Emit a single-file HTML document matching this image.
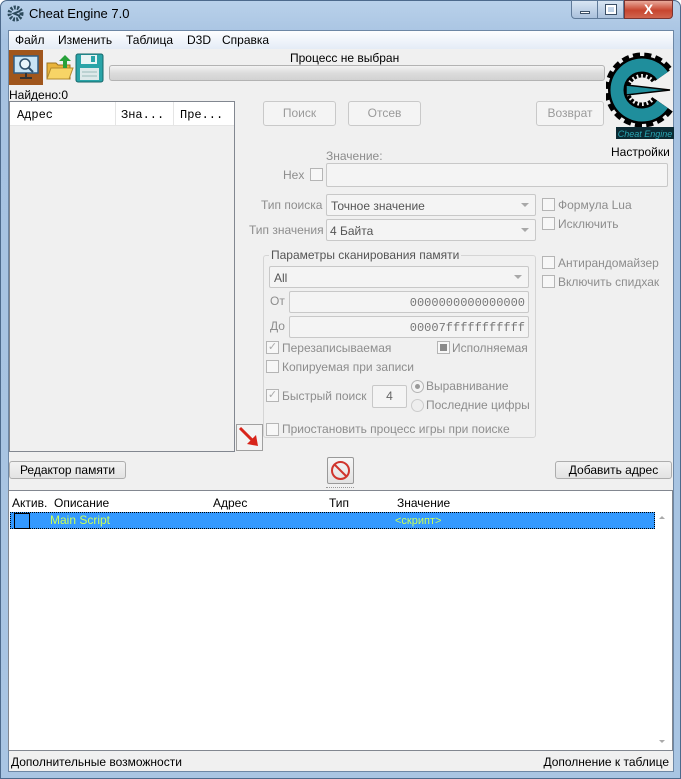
<!DOCTYPE html>
<html><head><meta charset="utf-8"><style>
*{box-sizing:border-box;margin:0;padding:0}
body{width:681px;height:779px;position:relative;overflow:hidden;font-family:"Liberation Sans","DejaVu Sans",sans-serif;font-size:12px;color:#000;background:#fff}
.a{position:absolute;white-space:nowrap}
.frame{left:0;top:0;width:681px;height:779px;background:linear-gradient(180deg,#b9d1ea 0,#a6c2e1 40px,#a9c5e3 100%);border:1px solid #4d6a8c;border-radius:7px 7px 0 0}
.client{left:8px;top:30px;width:666px;height:742px;background:#f0f0f0;border:1px solid #6d87a5}
.dis{color:#8d8d8d}
.btn{border:1px solid #adadad;border-radius:3px;background:linear-gradient(#f2f2f2,#e3e3e3);text-align:center}
.dbtn{border:1px solid #c9c9c9;border-radius:3px;background:#f4f4f4;color:#9a9a9a;text-align:center;line-height:22px}
.inp{border:1px solid #c8c8c8;border-radius:2px;background:#f4f4f4}
.cb{width:13px;height:13px;border:1px solid #b5b5b5;background:#f7f7f7}
.arr{position:absolute;right:6px;top:8px;width:0;height:0;border-left:4px solid transparent;border-right:4px solid transparent;border-top:4px solid #a8a8a8}
</style></head><body>
<div class="a frame"></div>
<svg class="a" style="left:7px;top:5px" width="17" height="17" viewBox="0 0 17 17"><circle cx="8.5" cy="8.5" r="6" fill="none" stroke="#2c4a5c" stroke-width="4" stroke-dasharray="2 1.3"/><path d="M13 6 L7 8.5 L13 11" fill="none" stroke="#2c4a5c" stroke-width="2"/></svg>
<div class="a" style="left:29px;top:6px;font-size:13px;color:#000">Cheat Engine 7.0</div>
<div class="a" style="left:571px;top:0;width:27px;height:19px;border:1px solid #5f7a99;border-radius:0 0 0 4px;background:linear-gradient(#d8e5f3,#aac1dc)"><div class="a" style="left:8px;top:10px;width:10px;height:3px;background:#fff;border:1px solid #3b4f66"></div></div>
<div class="a" style="left:597px;top:0;width:27px;height:19px;border:1px solid #5f7a99;background:linear-gradient(#d8e5f3,#aac1dc)"><div class="a" style="left:8px;top:4px;width:10px;height:9px;border:2px solid #fff;outline:1px solid #3b4f66"></div></div>
<div class="a" style="left:624px;top:0;width:49px;height:19px;border:1px solid #7a3430;border-radius:0 0 4px 0;background:linear-gradient(#e9a99a,#c7452f 55%,#d0654f);color:#fff;font-weight:bold;font-size:14px;text-align:center;line-height:17px">X</div>
<div class="a client"></div>
<div class="a" style="left:9px;top:31px;width:664px;height:18px;background:linear-gradient(#fdfeff,#e4ecf6)"></div>
<div class="a" style="left:15px;top:33px;font-size:12px">Файл</div>
<div class="a" style="left:58px;top:33px">Изменить</div>
<div class="a" style="left:126px;top:33px">Таблица</div>
<div class="a" style="left:187px;top:33px">D3D</div>
<div class="a" style="left:222px;top:33px">Справка</div>
<div class="a" style="left:9px;top:50px;width:34px;height:35px;background:#a0561c"></div>
<svg class="a" style="left:12px;top:54px" width="28" height="28" viewBox="0 0 28 28"><rect x="2" y="2" width="24" height="17" fill="#c9e4f5" stroke="#2f5f86" stroke-width="1.5"/><circle cx="13" cy="10" r="5" fill="#e9f4fb" stroke="#2f4f6b" stroke-width="1.5"/><path d="M16.5 13.5 L21 18" stroke="#2f4f6b" stroke-width="2"/><path d="M14 19v4M8 24h12" stroke="#333" stroke-width="2"/></svg>
<svg class="a" style="left:45px;top:53px" width="29" height="29" viewBox="0 0 29 29"><path d="M2 10h9l2 2h12v14H2z" fill="#e9b43a" stroke="#9b7320"/><path d="M2 26l4-11h22l-4 11z" fill="#f7d466" stroke="#b38a2c"/><path d="M20 2l6 6h-4v7h-4V8h-4z" fill="#27a13a"/></svg>
<svg class="a" style="left:75px;top:53px" width="29" height="30" viewBox="0 0 29 30"><rect x="1" y="1" width="27" height="28" rx="2" fill="#2aa4a8" stroke="#16676a"/><rect x="6" y="2" width="16" height="9" fill="#e9f4f4"/><rect x="16" y="3" width="4" height="6" fill="#2aa4a8"/><rect x="5" y="15" width="19" height="12" fill="#dde9ea"/><path d="M7 19h15M7 23h15" stroke="#9bb"/></svg>
<div class="a" style="left:290px;top:51px">Процесс не выбран</div>
<div class="a" style="left:109px;top:65px;width:496px;height:16px;border:1px solid #b3b3b3;border-radius:3px;background:linear-gradient(#f3f3f3,#dcdcdc 50%,#d2d2d2)"></div>
<div class="a" style="left:9px;top:88px">Найдено:0</div>
<svg class="a" style="left:606px;top:48px" width="68" height="96" viewBox="0 0 68 96">
<path d="M56.5 56.3 A25 25 0 1 1 56.5 27.7" fill="none" stroke="#000" stroke-width="25" stroke-dasharray="5 3"/>
<path d="M56.5 56.3 A25 25 0 1 1 56.5 27.7" fill="none" stroke="#000" stroke-width="18"/>
<path d="M56.5 56.3 A25 25 0 1 1 56.5 27.7" fill="none" stroke="#1f8e9c" stroke-width="13"/>
<path d="M20 37 L64 42 L20 47 Z" fill="#1f8e9c" stroke="#000" stroke-width="1.5"/>
<rect x="10" y="79" width="58" height="12" fill="#0b2a33"/><text x="39" y="89" font-size="9" fill="#2aa6b3" text-anchor="middle" font-style="italic" font-family="Liberation Sans">Cheat Engine</text></svg>
<div class="a" style="left:611px;top:145px;font-size:12px">Настройки</div>
<div class="a" style="left:9px;top:101px;width:226px;height:351px;border:1px solid #828790;background:#f0f0f0"></div>
<div class="a" style="left:10px;top:102px;width:224px;height:24px;background:#fff;border-bottom:1px solid #e5e5e5;font-family:'Liberation Mono',monospace;font-size:12px"><span class="a" style="left:7px;top:6px">Адрес</span><span class="a" style="left:105px;top:0;height:24px;border-left:1px solid #e5e5e5"></span><span class="a" style="left:111px;top:6px">Зна...</span><span class="a" style="left:163px;top:0;height:24px;border-left:1px solid #e5e5e5"></span><span class="a" style="left:170px;top:6px">Пре...</span></div>
<div class="a dbtn" style="left:263px;top:101px;width:73px;height:25px">Поиск</div>
<div class="a dbtn" style="left:348px;top:101px;width:73px;height:25px">Отсев</div>
<div class="a dbtn" style="left:536px;top:101px;width:68px;height:25px">Возврат</div>
<div class="a dis" style="left:326px;top:149px">Значение:</div>
<div class="a dis" style="left:283px;top:168px">Hex</div>
<div class="a cb" style="left:310px;top:168px"></div>
<div class="a inp" style="left:326px;top:163px;width:342px;height:24px"></div>
<div class="a dis" style="left:261px;top:198px">Тип поиска</div>
<div class="a inp" style="left:326px;top:194px;width:210px;height:22px"><span class="a" style="left:4px;top:4px;color:#555">Точное значение</span><i class="arr"></i></div>
<div class="a dis" style="left:249px;top:223px">Тип значения</div>
<div class="a inp" style="left:326px;top:219px;width:210px;height:22px"><span class="a" style="left:3px;top:4px;color:#555">4 Байта</span><i class="arr"></i></div>
<div class="a cb" style="left:542px;top:198px"></div><div class="a dis" style="left:558px;top:198px">Формула Lua</div>
<div class="a cb" style="left:542px;top:217px"></div><div class="a dis" style="left:558px;top:217px">Исключить</div>
<div class="a cb" style="left:542px;top:256px"></div><div class="a dis" style="left:558px;top:256px">Антирандомайзер</div>
<div class="a cb" style="left:542px;top:275px"></div><div class="a dis" style="left:558px;top:275px">Включить спидхак</div>
<div class="a" style="left:263px;top:255px;width:273px;height:183px;border:1px solid #d5d5d5;border-radius:3px"></div>
<div class="a" style="left:269px;top:248px;background:#f0f0f0;padding:0 2px;color:#555">Параметры сканирования памяти</div>
<div class="a inp" style="left:269px;top:266px;width:260px;height:22px"><span class="a" style="left:4px;top:4px;color:#555">All</span><i class="arr"></i></div>
<div class="a dis" style="left:270px;top:294px">От</div>
<div class="a inp" style="left:289px;top:291px;width:240px;height:22px;font-family:'Liberation Mono',monospace;color:#777"><span class="a" style="right:3px;top:4px">0000000000000000</span></div>
<div class="a dis" style="left:270px;top:319px">До</div>
<div class="a inp" style="left:289px;top:316px;width:240px;height:22px;font-family:'Liberation Mono',monospace;color:#777"><span class="a" style="right:3px;top:4px">00007fffffffffff</span></div>
<div class="a cb" style="left:266px;top:341px;color:#aaa;font-size:11px;line-height:11px;text-align:center">✓</div><div class="a dis" style="left:282px;top:341px">Перезаписываемая</div>
<div class="a cb" style="left:437px;top:341px;padding:2px"><div style="width:7px;height:7px;background:#8a8a8a"></div></div><div class="a dis" style="left:452px;top:341px">Исполняемая</div>
<div class="a cb" style="left:266px;top:360px"></div><div class="a dis" style="left:282px;top:360px">Копируемая при записи</div>
<div class="a cb" style="left:266px;top:389px;color:#aaa;font-size:11px;line-height:11px;text-align:center">✓</div><div class="a dis" style="left:282px;top:389px">Быстрый поиск</div>
<div class="a inp" style="left:372px;top:385px;width:35px;height:23px;color:#666;text-align:center;line-height:21px">4</div>
<div class="a" style="left:411px;top:380px;width:13px;height:13px;border:1px solid #b5b5b5;border-radius:50%;background:#f3f3f3;padding:3px"><div style="width:5px;height:5px;border-radius:50%;background:#999"></div></div><div class="a dis" style="left:426px;top:379px">Выравнивание</div>
<div class="a" style="left:411px;top:399px;width:13px;height:13px;border:1px solid #ccc;border-radius:50%;background:#eee"></div><div class="a dis" style="left:426px;top:398px">Последние цифры</div>
<div class="a cb" style="left:266px;top:423px"></div><div class="a dis" style="left:282px;top:422px">Приостановить процесс игры при поиске</div>
<div class="a" style="left:236px;top:424px;width:27px;height:27px;border:1px solid #a0a0a0;background:#f3f3f3"></div>
<svg class="a" style="left:238px;top:426px" width="23" height="23" viewBox="0 0 23 23"><path d="M2 2 L16 16" stroke="#d8241a" stroke-width="3"/><path d="M20 20 L9 18 L18 9 Z" fill="#d8241a"/></svg>
<div class="a btn" style="left:9px;top:461px;width:117px;height:18px;line-height:16px">Редактор памяти</div>
<div class="a" style="left:327px;top:457px;width:27px;height:27px;border:1px solid #999;border-radius:2px;background:linear-gradient(#f6f6f6,#e2e2e2)"></div>
<svg class="a" style="left:329px;top:459px" width="23" height="23" viewBox="0 0 23 23"><circle cx="11.5" cy="11.5" r="8.5" fill="none" stroke="#d0352d" stroke-width="2"/><path d="M5.5 5.5 L17.5 17.5" stroke="#d0352d" stroke-width="2"/></svg>
<div class="a btn" style="left:555px;top:461px;width:117px;height:18px;line-height:16px">Добавить адрес</div>
<div class="a" style="left:326px;top:487px;width:28px;height:1px;border-top:1px dotted #999"></div>
<div class="a" style="left:8px;top:490px;width:665px;height:261px;border:1px solid #828790;background:#fff"></div>
<div class="a" style="left:12px;top:496px">Актив.</div>
<div class="a" style="left:54px;top:496px">Описание</div>
<div class="a" style="left:213px;top:496px">Адрес</div>
<div class="a" style="left:329px;top:496px">Тип</div>
<div class="a" style="left:397px;top:496px">Значение</div>
<div class="a" style="left:10px;top:512px;width:645px;height:17px;background:#3399ff;border:1px dotted #000"></div>
<div class="a" style="left:14px;top:513px;width:16px;height:16px;border:1px solid #000;background:#3399ff"></div>
<div class="a" style="left:50px;top:513px;color:#c8ff5a">Main Script</div>
<div class="a" style="left:395px;top:515px;color:#c8ff5a;font-size:11px">&lt;скрипт&gt;</div>
<div class="a" style="left:659px;top:516px;border-left:3px solid transparent;border-right:3px solid transparent;border-bottom:3px solid #aaa"></div>
<div class="a" style="left:659px;top:740px;border-left:3px solid transparent;border-right:3px solid transparent;border-top:3px solid #aaa"></div>
<div class="a" style="left:11px;top:755px">Дополнительные возможности</div>
<div class="a" style="right:12px;top:755px">Дополнение к таблице</div>
</body></html>
